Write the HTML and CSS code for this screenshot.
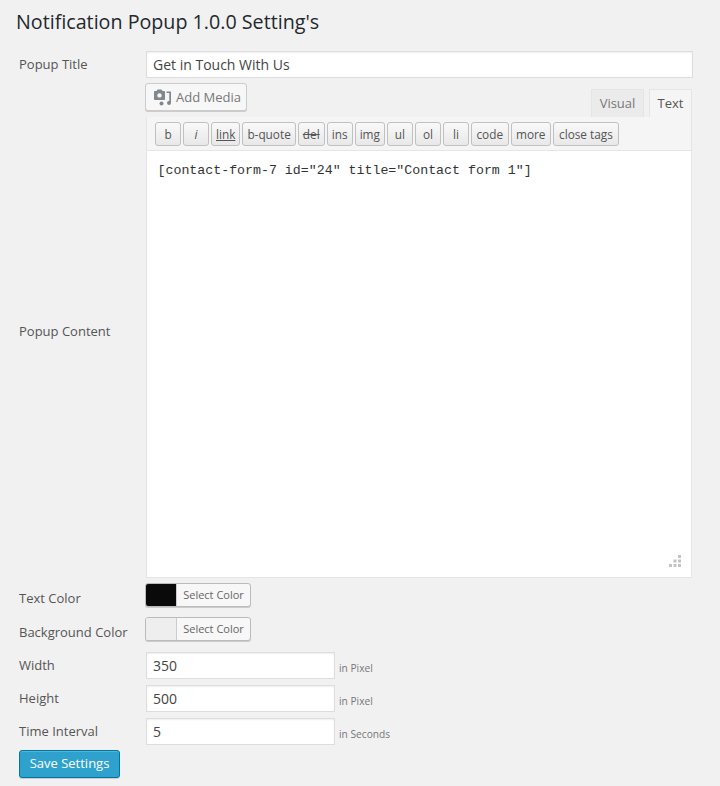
FILE: index.html
```html
<!DOCTYPE html>
<html lang="en">
<head>
<meta charset="utf-8">
<title>Notification Popup Settings</title>
<link rel="stylesheet" href="styles.css">
</head>
<body>
<h1 class="page-title">Notification Popup 1.0.0 Setting's</h1>
<form class="settings">
  <div class="row row-title">
    <label class="label">Popup Title</label>
    <input class="field field-wide" type="text" value="Get in Touch With Us">
  </div>
  <div class="row row-content">
    <label class="label">Popup Content</label>
    <div class="editor">
      <div class="editor-head">
        <button type="button" class="add-media">
          <svg class="media-icon" viewBox="0 0 18 18" width="18" height="18" aria-hidden="true">
            <path fill="#82878c" fill-rule="evenodd" d="M1 3h1.500L3.500 1.500h4L8.500 3H10c.6 0 1 .4 1 1v7c0 .6-.4 1-1 1H1c-.6 0-1-.4-1-1V4c0-.6.4-1 1-1zM5.500 5.200a2.200 2.200 0 1 0 0 4.400 2.200 2.200 0 0 0 0-4.400z"/>
            <path fill="#82878c" d="M12.500 3.500H17V15a2 2 0 1 1-1.700-2V5h-2.800z"/>
            <circle cx="7.500" cy="15.500" r="2" fill="#82878c"/>
          </svg>
          Add Media
        </button>
        <div class="tabs">
          <span class="tab tab-visual">Visual</span>
          <span class="tab tab-active">Text</span>
        </div>
      </div>
      <div class="editor-box">
        <div class="toolbar">
          <button type="button" class="tb">b</button>
          <button type="button" class="tb tb-i">i</button>
          <button type="button" class="tb tb-link">link</button>
          <button type="button" class="tb">b-quote</button>
          <button type="button" class="tb tb-del">del</button>
          <button type="button" class="tb">ins</button>
          <button type="button" class="tb">img</button>
          <button type="button" class="tb">ul</button>
          <button type="button" class="tb">ol</button>
          <button type="button" class="tb">li</button>
          <button type="button" class="tb tb-wide">code</button>
          <button type="button" class="tb tb-wide">more</button>
          <button type="button" class="tb tb-close">close tags</button>
        </div>
        <div class="editor-body">
          <textarea class="editor-text">[contact-form-7 id="24" title="Contact form 1"]</textarea>
          <svg class="resize" width="12" height="12" viewBox="0 0 12 12" aria-hidden="true">
            <g fill="#c4c4c4">
              <rect x="9" y="0" width="3" height="3"/>
              <rect x="4.500" y="4.500" width="3" height="3"/><rect x="9" y="4.500" width="3" height="3"/>
              <rect x="0" y="9" width="3" height="3"/><rect x="4.500" y="9" width="3" height="3"/><rect x="9" y="9" width="3" height="3"/>
            </g>
          </svg>
        </div>
      </div>
    </div>
  </div>
  <div class="row row-color row-text-color">
    <label class="label">Text Color</label>
    <button type="button" class="color-btn"><span class="swatch swatch-dark"></span><span class="color-text">Select Color</span></button>
  </div>
  <div class="row row-color row-bg-color">
    <label class="label">Background Color</label>
    <button type="button" class="color-btn"><span class="swatch swatch-light"></span><span class="color-text">Select Color</span></button>
  </div>
  <div class="row row-num row-width">
    <label class="label">Width</label>
    <input class="field field-num" type="text" value="350"><span class="unit">in Pixel</span>
  </div>
  <div class="row row-num">
    <label class="label">Height</label>
    <input class="field field-num" type="text" value="500"><span class="unit">in Pixel</span>
  </div>
  <div class="row row-num row-last">
    <label class="label">Time Interval</label>
    <input class="field field-num" type="text" value="5"><span class="unit">in Seconds</span>
  </div>
  <button type="submit" class="save">Save Settings</button>
</form>
</body>
</html>
```
FILE: styles.css
```css
* { box-sizing: border-box; }
html, body { height: 100%; }
body {
  margin: 0;
  background: #f1f1f1;
  font-family: "Open Sans", sans-serif;
  font-size: 13px;
  color: #444;
  overflow: hidden;
}
.page-title {
  margin: 0;
  padding: 8px 0 0 16px;
  height: 51px;
  font-size: 19.700px;
  line-height: 27px;
  font-weight: 400;
  color: #23282d;
}
.settings { padding-left: 19px; }
.row { display: flex; }
.label {
  flex: 0 0 127px;
  font-size: 13px;
  line-height: 18px;
  color: #555;
}
.row-title { height: 32px; }
.row-title .label { padding-top: 4px; }
.field {
  height: 27px;
  border: 1px solid #ddd;
  background: #fff;
  box-shadow: inset 0 1px 2px rgba(0,0,0,.07);
  font: 14px/25px "Open Sans", sans-serif;
  color: #444;
  padding: 0 6px;
  margin: 0;
  outline: 0;
}
.field-wide { width: 547px; }
.row-content { height: 495px; }
.row-content .label { align-self: center; }
.editor { width: 546px; }
.editor-head {
  display: flex;
  justify-content: space-between;
  align-items: flex-end;
  height: 34px;
}
.add-media {
  display: flex;
  align-items: center;
  gap: 4px;
  width: 102px;
  height: 28px;
  margin: 0 0 6px -1px;
  padding: 0 0 0 8px;
  border: 1px solid #ccc;
  border-radius: 3px;
  background: #f7f7f7;
  box-shadow: 0 1px 0 #ccc;
  font: 13px/26px "Open Sans", sans-serif;
  color: #777;
}
.tabs { display: flex; gap: 5px; }
.tab {
  height: 28px;
  border: 1px solid #e5e5e5;
  border-bottom: 0;
  background: #ebebeb;
  font-size: 13px;
  line-height: 26px;
  text-align: center;
  color: #777;
}
.tab-visual { width: 53px; }
.tab-active { width: 43px; background: #f5f5f5; color: #555; }
.editor-box {
  border: 1px solid #e5e5e5;
  border-top: 0;
  background: #fff;
  height: 461px;
  display: flex;
  flex-direction: column;
}
.toolbar {
  display: flex;
  gap: 2px;
  height: 34px;
  padding: 5px 0 0 8px;
  background: #f5f5f5;
  border-bottom: 1px solid #e5e5e5;
}
.tb {
  min-width: 26px;
  height: 24px;
  padding: 0 4px;
  margin: 0;
  border: 1px solid #c0c0c0;
  border-radius: 3px;
  background: linear-gradient(#f9f9f9, #e8e8e8);
  font: 11.800px/22px "Open Sans", sans-serif;
  color: #555;
}
.tb-wide { padding: 0 4.500px; }
.tb-close { padding: 0 5px; }
.tb-i { font-style: italic; }
.tb-link { text-decoration: underline; }
.tb-del { text-decoration: line-through; }
.editor-body { position: relative; flex: 1; }
.editor-text {
  display: block;
  width: 100%;
  height: 100%;
  border: 0;
  padding: 10px 10.500px;
  resize: none;
  outline: 0;
  background: #fff;
  font: 13.280px/19px "Liberation Mono", monospace;
  color: #333;
}
.resize { position: absolute; right: 10px; bottom: 10px; }
.row-color { height: 34px; }
.row-text-color { margin-top: 5px; }
.row-color .label { padding-top: 6px; }
.color-btn {
  display: flex;
  width: 106px;
  height: 24px;
  margin: 0 0 0 -1px;
  padding: 0;
  border: 1px solid #bbb;
  border-radius: 3px;
  background: #f7f7f7;
  box-shadow: 0 1px 0 #ccc;
  overflow: hidden;
}
.swatch { flex: 0 0 31px; height: 100%; border-right: 1px solid #ccc; }
.swatch-dark { background: #0a0a0a; }
.swatch-light { background: #eee; }
.color-text {
  flex: 1;
  font: 11px/22px "Open Sans", sans-serif;
  color: #666;
  text-align: center;
}
.row-num { height: 33px; align-items: flex-start; }
.row-width { margin-top: 1px; }
.row-last { height: 32px; }
.row-num .label { padding-top: 4px; }
.field-num { width: 189px; }
.unit {
  margin-left: 4px;
  padding-top: 9px;
  font-size: 10.200px;
  line-height: 14px;
  color: #777;
}
.save {
  display: block;
  width: 101px;
  height: 28px;
  margin: 0;
  padding: 0 0 2px;
  border: 1px solid #0074a2;
  border-radius: 3px;
  background: #2ea2cc;
  box-shadow: inset 0 1px 0 rgba(120,200,230,.5), 0 1px 0 rgba(0,0,0,.15);
  font: 13px/24px "Open Sans", sans-serif;
  color: #fff;
}
```
